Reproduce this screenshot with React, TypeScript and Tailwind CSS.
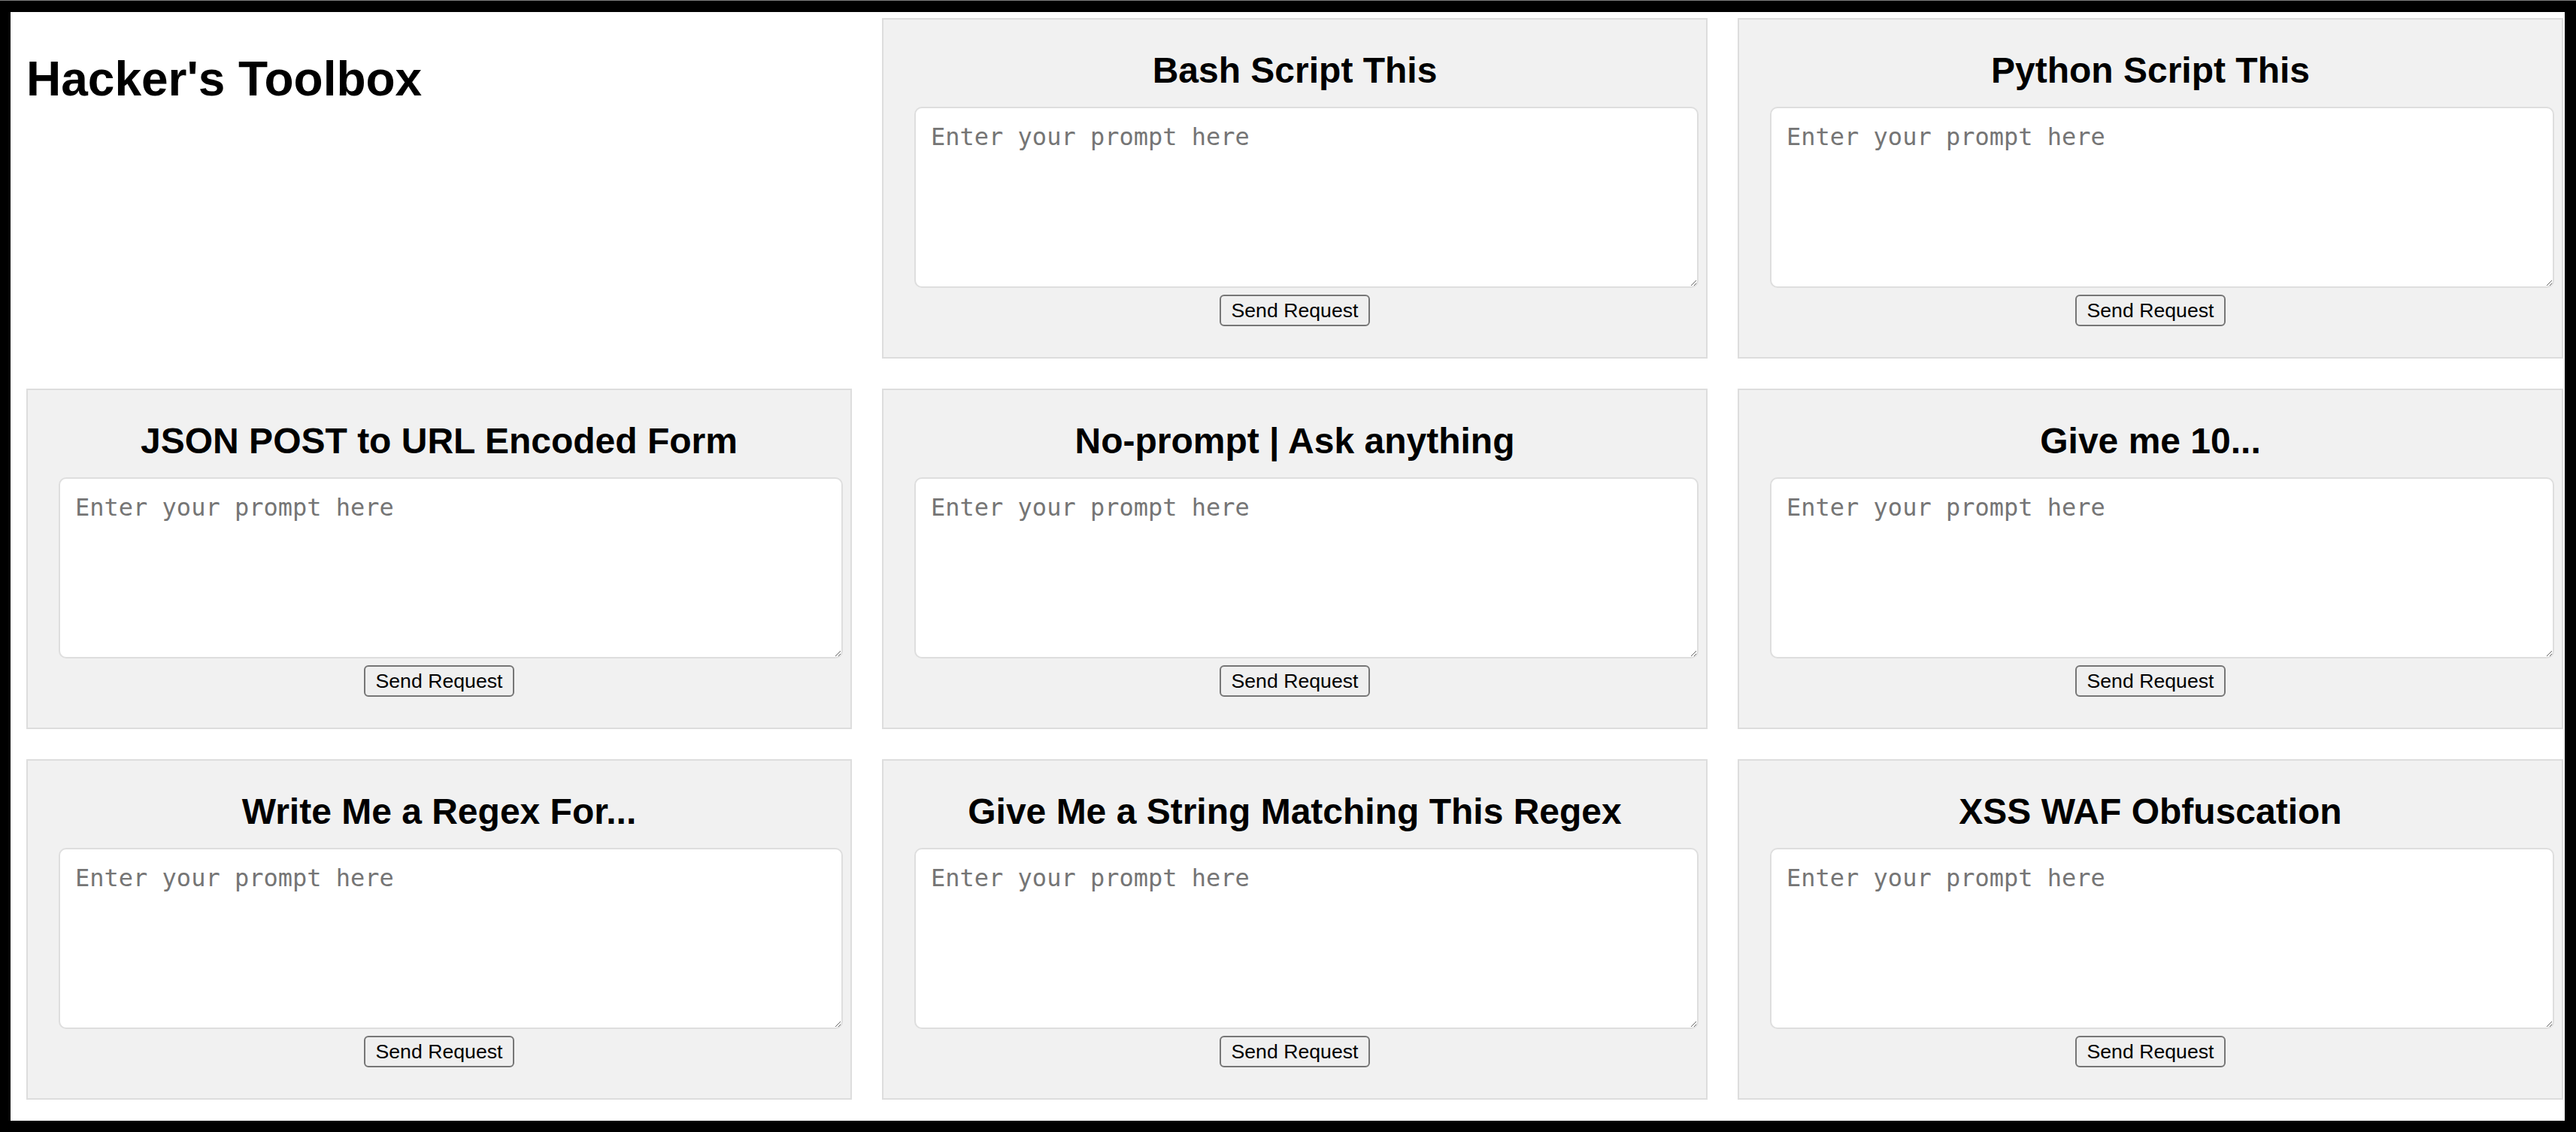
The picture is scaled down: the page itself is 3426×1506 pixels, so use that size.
import React from "react";

const titles = [
  "Bash Script This",
  "Python Script This",
  "JSON POST to URL Encoded Form",
  "No-prompt | Ask anything",
  "Give me 10...",
  "Write Me a Regex For...",
  "Give Me a String Matching This Regex",
  "XSS WAF Obfuscation",
];

function Panel({ title }: { title: string }) {
  return (
    <div className="flex h-[453px] w-[1098px] flex-col border-2 border-[#dddddd] bg-[#f1f1f1] pt-[40px]">
      <h2 className="m-0 mb-[21px] text-center text-[48px] font-bold leading-[55px] text-black">
        {title}
      </h2>
      <textarea
        placeholder="Enter your prompt here"
        className="ml-[41px] h-[241px] w-[1043px] rounded-[10px] border-2 border-[#dedede] bg-white px-[20px] pb-[20px] pt-[14px] font-['DejaVu_Sans_Mono',monospace] text-[32px] leading-normal text-black outline-none placeholder:text-[#757575]"
      />
      <div className="mt-[9px] flex justify-center">
        <button className="flex h-[42px] items-center rounded-[6px] border-2 border-[#767676] bg-[#efefef] px-[14px] text-[26.67px] leading-normal text-black">
          Send Request
        </button>
      </div>
    </div>
  );
}

export default function App() {
  return (
    <div className="box-border h-[1506px] w-[3426px] overflow-hidden border-t border-[#808080] bg-black pb-[15px] pl-[14px] pr-[15px] pt-[15px] font-['Liberation_Sans',Arial,sans-serif]">
      <div className="h-full w-full overflow-hidden bg-white pl-[21px] pt-[8px]">
        <div className="grid grid-cols-[1098px_1098px_1098px] grid-rows-[453px_453px_453px] gap-[40px]">
          <div>
            <h1 className="m-0 mt-[44px] text-[64px] font-bold leading-[74px] text-black">
              Hacker's Toolbox
            </h1>
          </div>
          {titles.map((t) => (
            <Panel key={t} title={t} />
          ))}
        </div>
      </div>
    </div>
  );
}
